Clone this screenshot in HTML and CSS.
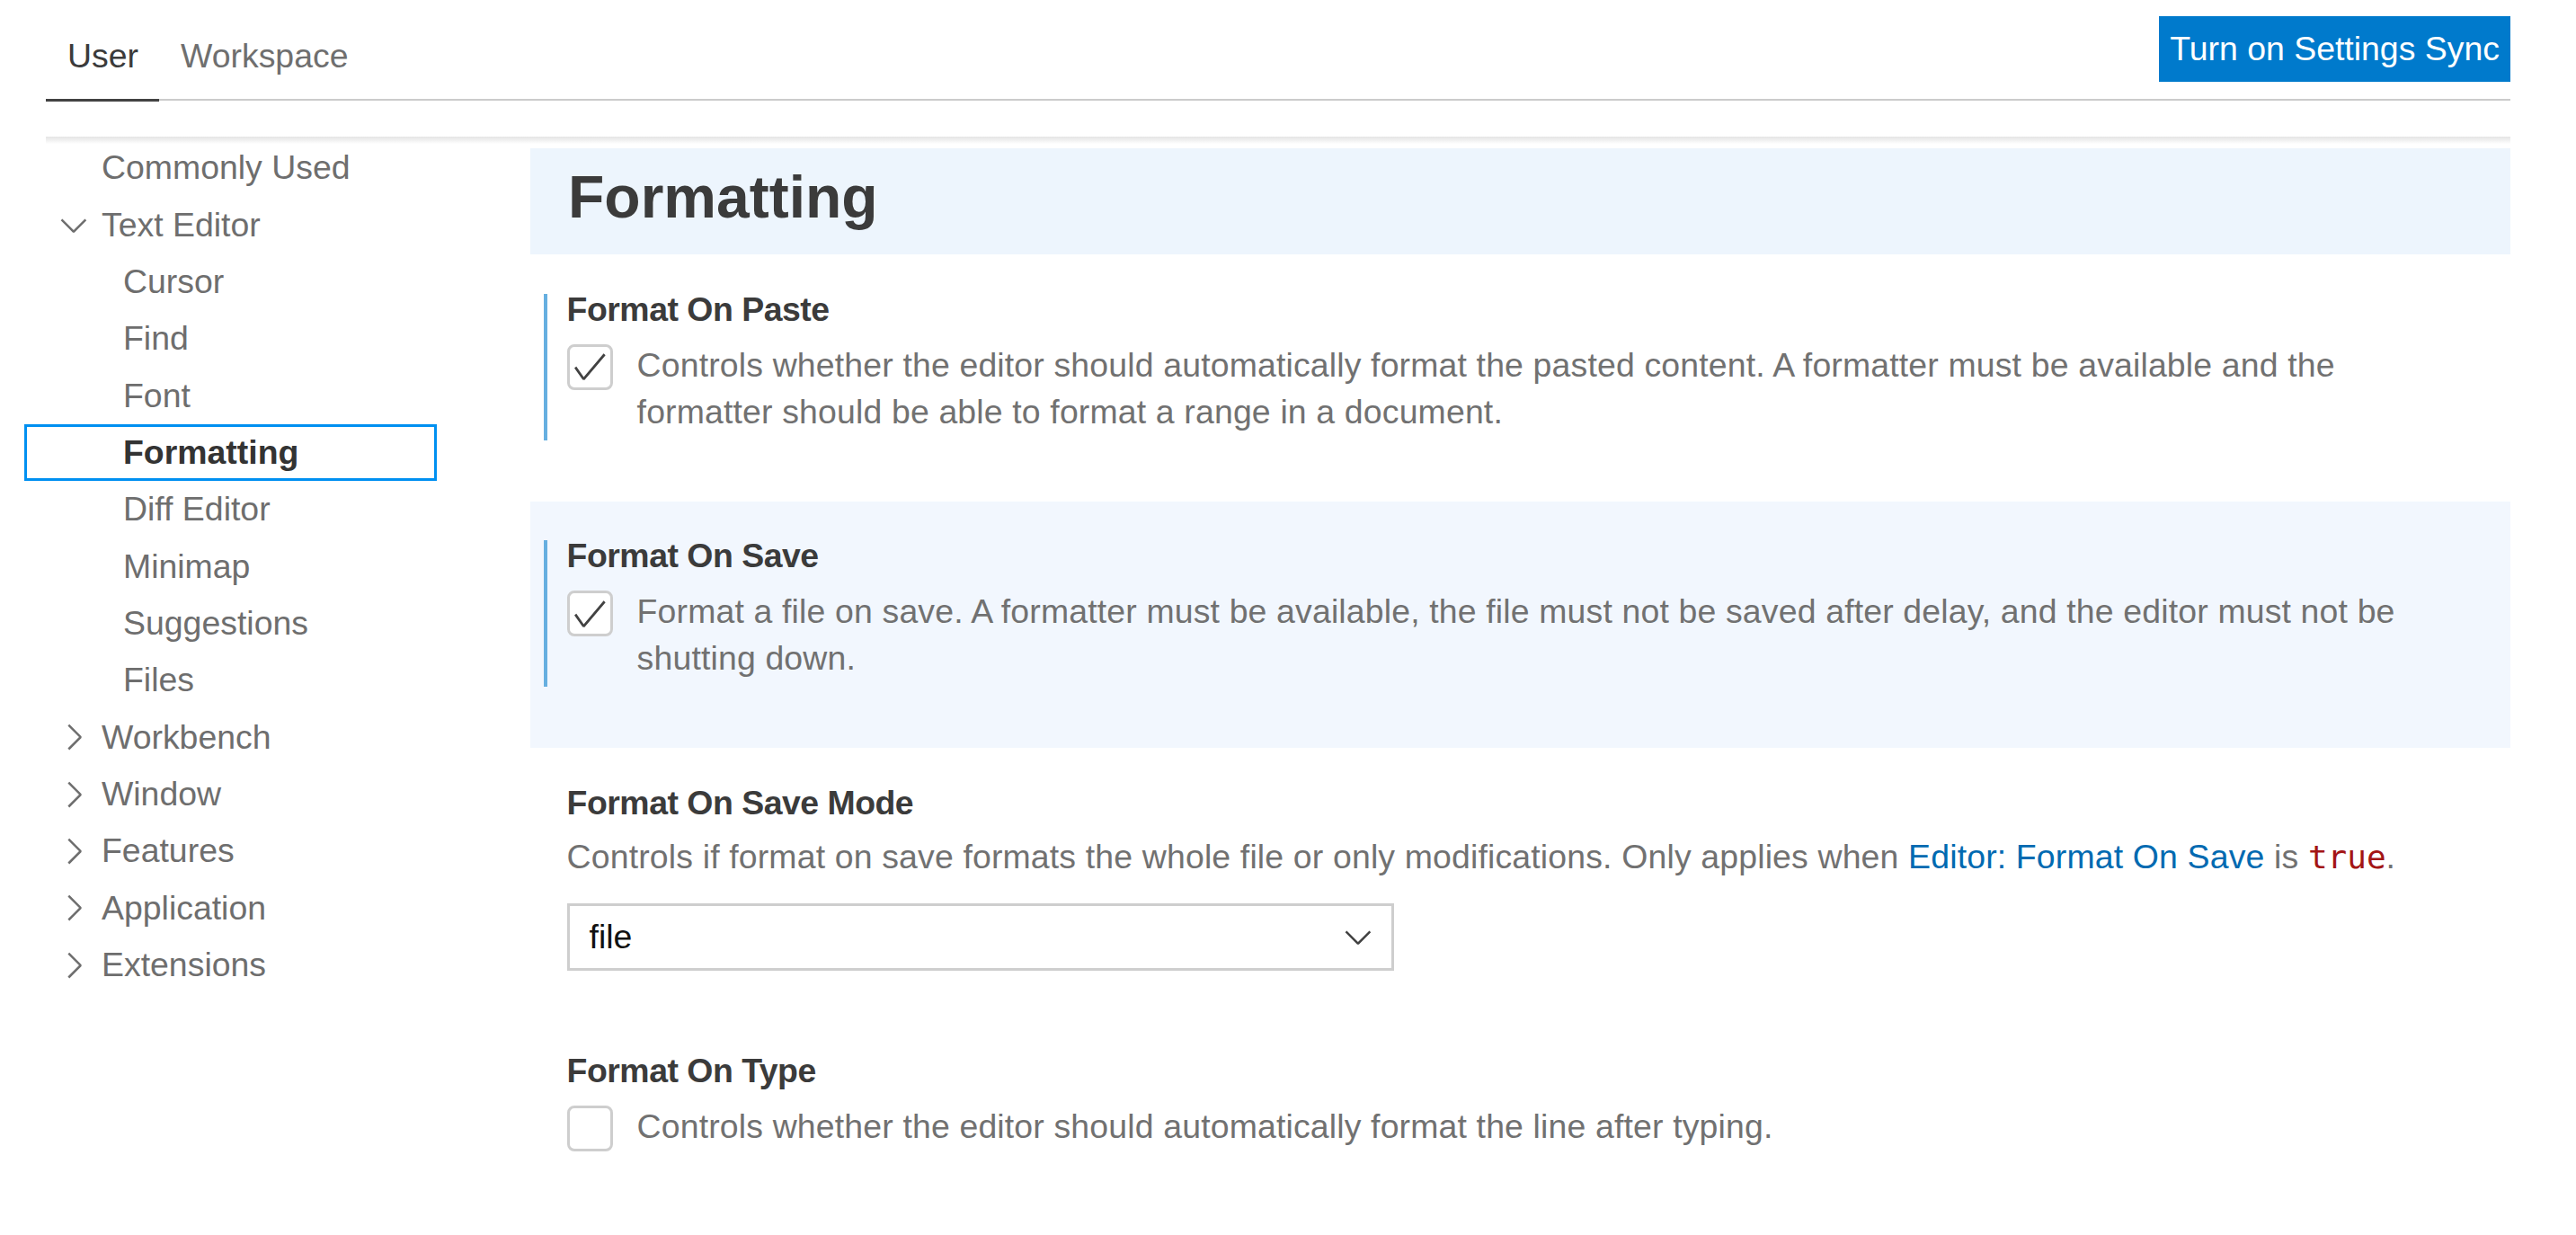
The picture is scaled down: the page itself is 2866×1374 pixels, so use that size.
FILE: index.html
```html
<!DOCTYPE html>
<html lang="en">
<head>
<meta charset="utf-8">
<title>Settings</title>
<link rel="stylesheet" href="styles.css">
</head>
<body>
<div class="page">
  <header class="header">
    <nav class="tabs">
      <span class="tab active">User</span>
      <span class="tab">Workspace</span>
    </nav>
    <button class="sync">Turn on Settings Sync</button>
  </header>

  <div class="body">
    <div class="shadow"></div>

    <aside class="toc">
      <div class="toc-row l1"><span class="twisty"></span><span>Commonly Used</span></div>
      <div class="toc-row l1"><span class="twisty"><svg viewBox="0 0 16 16"><path d="M7.976 10.072l4.357-4.357.62.618L8.284 11h-.618L3 6.333l.619-.618 4.357 4.357z"/></svg></span><span>Text Editor</span></div>
      <div class="toc-row l2">Cursor</div>
      <div class="toc-row l2">Find</div>
      <div class="toc-row l2">Font</div>
      <div class="toc-row l2 selected">Formatting</div>
      <div class="toc-row l2">Diff Editor</div>
      <div class="toc-row l2">Minimap</div>
      <div class="toc-row l2">Suggestions</div>
      <div class="toc-row l2">Files</div>
      <div class="toc-row l1"><span class="twisty"><svg viewBox="0 0 16 16"><path d="M10.072 8.024L5.715 3.667l.618-.62L11 7.716v.618L6.333 13l-.618-.619 4.357-4.357z"/></svg></span><span>Workbench</span></div>
      <div class="toc-row l1"><span class="twisty"><svg viewBox="0 0 16 16"><path d="M10.072 8.024L5.715 3.667l.618-.62L11 7.716v.618L6.333 13l-.618-.619 4.357-4.357z"/></svg></span><span>Window</span></div>
      <div class="toc-row l1"><span class="twisty"><svg viewBox="0 0 16 16"><path d="M10.072 8.024L5.715 3.667l.618-.62L11 7.716v.618L6.333 13l-.618-.619 4.357-4.357z"/></svg></span><span>Features</span></div>
      <div class="toc-row l1"><span class="twisty"><svg viewBox="0 0 16 16"><path d="M10.072 8.024L5.715 3.667l.618-.62L11 7.716v.618L6.333 13l-.618-.619 4.357-4.357z"/></svg></span><span>Application</span></div>
      <div class="toc-row l1"><span class="twisty"><svg viewBox="0 0 16 16"><path d="M10.072 8.024L5.715 3.667l.618-.62L11 7.716v.618L6.333 13l-.618-.619 4.357-4.357z"/></svg></span><span>Extensions</span></div>
    </aside>

    <main class="content">
      <h2 class="group-title">Formatting</h2>

      <section class="setting modified">
        <span class="bar"></span>
        <div class="label">Format On Paste</div>
        <div class="desc-row">
          <span class="checkbox"><svg viewBox="0 0 16 16"><path d="M14.431 3.323l-8.47 10-.79-.036-3.35-4.77.818-.574 2.978 4.24 8.051-9.506.764.646z"/></svg></span>
          <span class="desc">Controls whether the editor should automatically format the pasted content. A formatter must be available and the formatter should be able to format a range in a document.</span>
        </div>
      </section>

      <section class="setting modified focused">
        <span class="bar"></span>
        <div class="label">Format On Save</div>
        <div class="desc-row">
          <span class="checkbox"><svg viewBox="0 0 16 16"><path d="M14.431 3.323l-8.47 10-.79-.036-3.35-4.77.818-.574 2.978 4.24 8.051-9.506.764.646z"/></svg></span>
          <span class="desc">Format a file on save. A formatter must be available, the file must not be saved after delay, and the editor must not be shutting down.</span>
        </div>
      </section>

      <section class="setting mode">
        <div class="label">Format On Save Mode</div>
        <div class="desc plain">Controls if format on save formats the whole file or only modifications. Only applies when <span class="link">Editor: Format On Save</span> is <code class="code">true</code>.</div>
        <div class="select">
          <span>file</span>
          <svg class="select-arrow" viewBox="0 0 16 16"><path d="M7.976 10.072l4.357-4.357.62.618L8.284 11h-.618L3 6.333l.619-.618 4.357 4.357z"/></svg>
        </div>
      </section>

      <section class="setting">
        <div class="label">Format On Type</div>
        <div class="desc-row">
          <span class="checkbox"></span>
          <span class="desc">Controls whether the editor should automatically format the line after typing.</span>
        </div>
      </section>
    </main>
  </div>
</div>
</body>
</html>
```

FILE: styles.css
```css
html, body {
  margin: 0;
  padding: 0;
  overflow: hidden;
  background: #ffffff;
}

body {
  font-family: "Liberation Sans", Arial, Helvetica, sans-serif;
  font-size: 37.44px;
  color: #3c3c3c;
}

.page {
  width: 2866px;
  height: 1374px;
  overflow: hidden;
}

/* ---------- header ---------- */
.header {
  margin-left: 51px;
  width: 2742px;
  height: 110px;
  border-bottom: 2px solid #cbcbcb;
  display: flex;
  justify-content: space-between;
  align-items: flex-start;
}

.tabs {
  align-self: flex-end;
  display: flex;
}

.tab {
  position: relative;
  padding: 0 23px 22px 24px;
  line-height: 52px;
  color: #6f6f6f;
}

.tab.active {
  color: #3b3b3b;
}

.tab.active::after {
  content: "";
  position: absolute;
  left: 0;
  right: 0;
  bottom: -3px;
  height: 3px;
  background: #424242;
}

.sync {
  margin-top: 18px;
  height: 73px;
  padding: 0 12px;
  border: 0;
  background: #007acc;
  color: #ffffff;
  font-family: inherit;
  font-size: 37.44px;
  line-height: 73px;
}

/* ---------- body ---------- */
.body {
  position: relative;
  display: flex;
  margin-top: 41px;
  margin-left: 27px;
  width: 2766px;
}

.shadow {
  position: absolute;
  left: 24px;
  right: 0;
  top: -1px;
  height: 8px;
  background: linear-gradient(#e4e4e4, #f6f6f6 70%, rgba(255,255,255,0));
  z-index: 2;
}

/* ---------- table of contents ---------- */
.toc {
  flex: none;
  width: 563px;
  padding-top: 2px;
}

.toc-row {
  height: 63.36px;
  box-sizing: border-box;
  display: flex;
  align-items: center;
  color: #6e6e6e;
  white-space: nowrap;
}

.toc-row.l1 {
  padding-left: 32.4px;
}

.toc-row.l2 {
  padding-left: 110px;
}

.toc-row.selected {
  width: 459px;
  padding-left: 107px;
  border: 3px solid #0090f1;
  font-weight: bold;
  color: #333333;
}

.twisty {
  flex: none;
  width: 46px;
  height: 46px;
  margin-right: 7.6px;
  display: flex;
}

.twisty svg {
  width: 46px;
  height: 46px;
  fill: #6e6e6e;
}

/* ---------- content ---------- */
.content {
  flex: 1;
  padding-top: 11.5px;
}

.group-title {
  margin: 0;
  height: 118.5px;
  box-sizing: border-box;
  padding: 14.5px 0 0 42px;
  background: #edf5fd;
  font-size: 66px;
  line-height: 80px;
  font-weight: bold;
  color: #3b3b3b;
}

.setting {
  position: relative;
  padding: 34.6px 80px 74px 40.6px;
}

.setting.focused {
  background: #f2f7fe;
}

.setting .bar {
  position: absolute;
  left: 15px;
  top: 43.5px;
  bottom: 68px;
  width: 4px;
  background: #66afe0;
}

.label {
  line-height: 52px;
  font-weight: bold;
  letter-spacing: -0.5px;
  color: #3b3b3b;
}

.desc-row {
  display: flex;
  align-items: flex-start;
  margin-top: 10px;
}

.checkbox {
  flex: none;
  width: 51px;
  height: 51px;
  box-sizing: border-box;
  margin: 3px 27px 0 0;
  border: 3px solid #cecece;
  border-radius: 8px;
  background: #ffffff;
  display: flex;
  align-items: center;
  justify-content: center;
}

.checkbox svg {
  width: 44px;
  height: 44px;
  fill: #424242;
}

.desc {
  line-height: 52px;
  letter-spacing: 0.15px;
  color: #717171;
}

.setting.mode {
  padding-bottom: 51px;
}

.desc.plain {
  margin-top: 8px;
}

.link {
  color: #006ab1;
}

.code {
  font-family: "DejaVu Sans Mono", "Liberation Mono", monospace;
  font-size: 36px;
  letter-spacing: 0;
  color: #a31515;
}

.select {
  margin-top: 25px;
  width: 920px;
  height: 75px;
  box-sizing: border-box;
  border: 3px solid #cecece;
  padding: 0 14px 0 22px;
  display: flex;
  align-items: center;
  justify-content: space-between;
  color: #111111;
}

.select-arrow {
  width: 46px;
  height: 46px;
  fill: #424242;
}
```
